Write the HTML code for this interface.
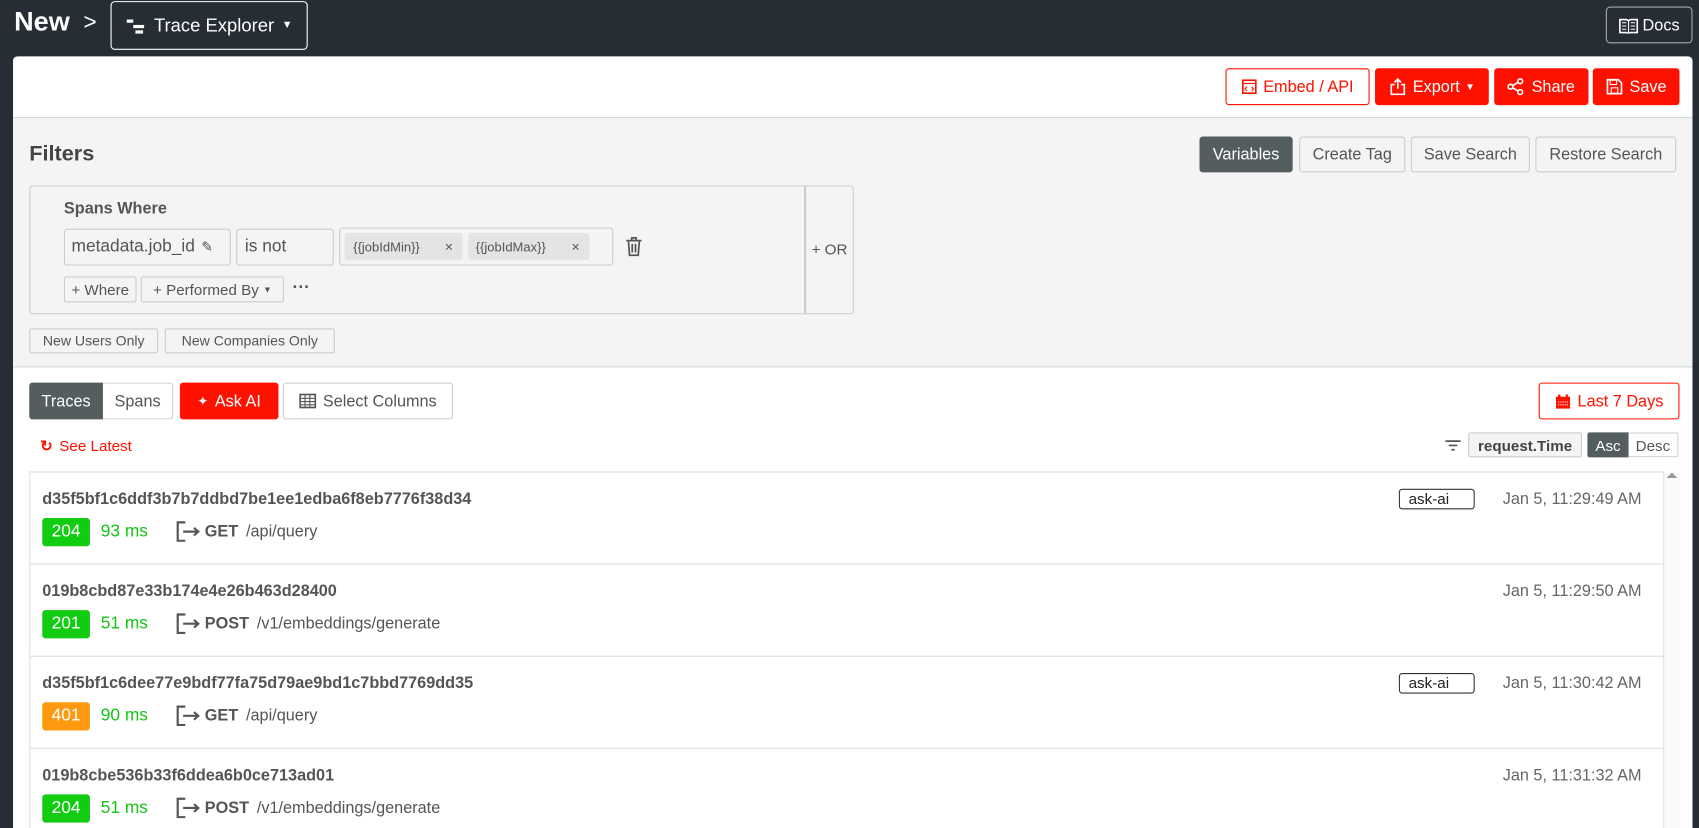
<!DOCTYPE html>
<html><head><meta charset="utf-8"><style>
*{box-sizing:border-box;margin:0;padding:0}
html,body{width:1699px;height:828px;overflow:hidden;background:#262d34;font-family:"Liberation Sans",Arial,sans-serif}
#w{position:absolute;left:0;top:0;width:1568px;height:764px;transform:scale(1.08355,1.0838);transform-origin:0 0}
.a{position:absolute}
.btn{position:absolute;display:flex;align-items:center;justify-content:center;border-radius:3px;font-size:15px;white-space:nowrap}
.red{background:#ff1100;color:#fff}
.ored{border:1px solid #ff1100;color:#ff1100;background:#fff}
.gr{border:1px solid #ccc;background:#f4f4f4;color:#555}
.dk{background:#555e5e;color:#fff}
.sm{font-size:13px;border:1px solid #ccc;background:#f4f4f4;color:#555;border-radius:2px}
.row{position:absolute;left:0;width:1509px;height:85px;border-bottom:1px solid #ddd}
.id{position:absolute;left:11px;top:16px;font-size:15px;font-weight:bold;color:#555}
.badge{position:absolute;left:11px;top:42px;width:44px;height:26px;border-radius:3px;color:#fff;font-size:16px;display:flex;align-items:center;justify-content:center}
.ms{position:absolute;left:65px;top:46px;color:#16c416;font-size:16px}
.req{position:absolute;left:134px;top:44px;color:#555;font-size:15px;display:flex;align-items:center;gap:3px}
.date{position:absolute;right:22px;top:16px;color:#666;font-size:15px}
.tag{position:absolute;left:1263px;top:15px;width:70px;height:19px;border:1px solid #333;border-radius:3px;font-size:14px;color:#222;padding-left:8px;line-height:17px}
</style></head><body><div id="w">
<div class="a" style="left:13px;top:6px;color:#fff;font-size:25px;font-weight:bold">New</div>
<div class="a" style="left:77px;top:9px;color:#fff;font-size:21px">&gt;</div>
<div class="btn" style="left:102px;top:1px;width:182px;height:45px;border:1px solid #fff;color:#fff;font-size:17px;border-radius:4px">
<svg width="22" height="16" viewBox="0 0 22 16" style="margin-right:4px"><rect x="1" y="2" width="6" height="3" fill="#fff"/><rect x="7" y="7" width="10" height="3" fill="#fff"/><rect x="9" y="12" width="7" height="3" fill="#fff"/></svg>Trace Explorer <span style="font-size:10px;margin-left:7px">▼</span></div>
<div class="btn" style="left:1482px;top:6px;width:80px;height:34px;border:1px solid #aaa;color:#fff;font-size:15px;border-radius:4px">
<svg width="18" height="15" viewBox="0 0 18 15" style="margin-right:4px"><path d="M1 2h6l2 1 2-1h6v12h-6l-2 1-2-1H1z" fill="none" stroke="#fff" stroke-width="1.5"/><path d="M9 3v11M3 5h4M3 8h4M3 11h4M11 5h4M11 8h4M11 11h4" stroke="#fff"/></svg>Docs</div>

<div class="a" style="left:12px;top:52px;width:1550px;height:712px;background:#fff;border-radius:4px 4px 0 0"></div>
<div class="btn ored" style="left:1131px;top:63px;width:133px;height:34px"><svg width="14" height="14" style="margin-right:6px"><rect x="1" y="1" width="12" height="12" fill="none" stroke="#f10" stroke-width="1.5"/><path d="M1 4h12M5 7l-2 2 2 2M9 7l2 2-2 2" stroke="#f10" fill="none"/></svg>Embed / API</div>
<div class="btn red" style="left:1269px;top:63px;width:105px;height:34px"><svg width="16" height="16" style="margin-right:6px"><path d="M5 6H2v9h12V6h-3M8 10V1M5 4l3-3 3 3" stroke="#fff" stroke-width="1.5" fill="none"/></svg>Export <span style="font-size:9px;margin-left:5px">▼</span></div>
<div class="btn red" style="left:1379px;top:63px;width:87px;height:34px"><svg width="16" height="16" style="margin-right:6px"><circle cx="12" cy="3" r="2.2" fill="none" stroke="#fff" stroke-width="1.5"/><circle cx="12" cy="13" r="2.2" fill="none" stroke="#fff" stroke-width="1.5"/><circle cx="3" cy="8" r="2.2" fill="none" stroke="#fff" stroke-width="1.5"/><path d="M5 7l5-3M5 9l5 3" stroke="#fff" stroke-width="1.5"/></svg>Share</div>
<div class="btn red" style="left:1470px;top:63px;width:80px;height:34px"><svg width="16" height="16" style="margin-right:6px"><path d="M1.5 1.5h10l3 3v10h-13z" fill="none" stroke="#fff" stroke-width="1.5"/><rect x="4" y="2" width="6" height="4" fill="none" stroke="#fff"/><rect x="5" y="9" width="6" height="5" fill="none" stroke="#fff"/></svg>Save</div>

<div class="a" style="left:12px;top:108px;width:1550px;height:231px;background:#f4f4f4;border-top:1px solid #d3d6d6;border-bottom:1px solid #d3d6d6"></div>
<div class="a" style="left:27px;top:131px;font-size:20px;font-weight:bold;color:#444">Filters</div>
<div class="btn dk" style="left:1107px;top:126px;width:86px;height:33px">Variables</div>
<div class="btn gr" style="left:1199px;top:126px;width:98px;height:33px">Create Tag</div>
<div class="btn gr" style="left:1302px;top:126px;width:110px;height:33px">Save Search</div>
<div class="btn gr" style="left:1417px;top:126px;width:130px;height:33px">Restore Search</div>

<div class="a" style="left:27px;top:171px;width:761px;height:119px;border:1px solid #ccc;border-radius:3px"></div>
<div class="a" style="left:742px;top:171px;width:2px;height:119px;background:#ccc"></div>
<div class="a" style="left:749px;top:222px;font-size:14px;color:#555">+ OR</div>
<div class="a" style="left:59px;top:184px;font-size:15px;font-weight:bold;color:#555">Spans Where</div>
<div class="btn" style="left:59px;top:211px;width:154px;height:34px;border:1px solid #ccc;color:#555;justify-content:flex-start;padding-left:6px;font-size:16px">metadata.job_id <span style="font-size:13px;margin-left:6px">✎</span></div>
<div class="btn" style="left:218px;top:211px;width:90px;height:34px;border:1px solid #ccc;color:#555;justify-content:flex-start;padding-left:7px;font-size:16px">is not</div>
<div class="a" style="left:313px;top:210px;width:253px;height:35px;border:1px solid #ccc;border-radius:3px"></div>
<div class="btn" style="left:318px;top:215px;width:109px;height:25px;background:#e4e4e4;color:#555;font-size:12px;justify-content:space-between;padding:0 9px 0 8px">{{jobIdMin}}<span style="font-size:13px">×</span></div>
<div class="btn" style="left:432px;top:215px;width:112px;height:25px;background:#e4e4e4;color:#555;font-size:12px;justify-content:space-between;padding:0 9px 0 7px">{{jobIdMax}}<span style="font-size:13px">×</span></div>
<svg class="a" style="left:577px;top:218px" width="16" height="19" viewBox="0 0 16 19"><path d="M1 4h14M6 4V1.5h4V4M3 5l1 12.5h8L13 5M6.5 7v8M9.5 7v8" fill="none" stroke="#555" stroke-width="1.6"/></svg>
<div class="btn sm" style="left:59px;top:255px;width:67px;height:24px;font-size:14px">+ Where</div>
<div class="btn sm" style="left:130px;top:255px;width:132px;height:24px;font-size:14px">+ Performed By <span style="font-size:8px;margin-left:4px">▼</span></div>
<div class="a" style="left:270px;top:257px;font-size:16px;color:#555;font-weight:bold">···</div>
<div class="btn sm" style="left:27px;top:303px;width:119px;height:23px">New Users Only</div>
<div class="btn sm" style="left:152px;top:303px;width:157px;height:23px">New Companies Only</div>

<div class="btn dk" style="left:27px;top:353px;width:68px;height:34px;border-radius:3px 0 0 3px">Traces</div>
<div class="btn" style="left:95px;top:353px;width:65px;height:34px;border:1px solid #ccc;border-left:none;color:#555;border-radius:0 3px 3px 0">Spans</div>
<div class="btn red" style="left:166px;top:353px;width:91px;height:34px"><span style="font-size:12px;margin-right:6px">✦</span>Ask AI</div>
<div class="btn" style="left:261px;top:353px;width:157px;height:34px;border:1px solid #ccc;color:#555"><svg width="16" height="14" style="margin-right:6px"><rect x="1" y="1" width="14" height="12" fill="none" stroke="#555" stroke-width="1.5"/><path d="M1 4.5h14M1 7.5h14M1 10.5h14M5.5 1v12M10 1v12" stroke="#555"/></svg>Select Columns</div>
<div class="btn ored" style="left:1420px;top:353px;width:130px;height:34px"><svg width="15" height="15" style="margin-right:6px"><rect x="1" y="3" width="13" height="11" fill="#f10"/><rect x="3" y="1" width="2" height="3" fill="#f10"/><rect x="10" y="1" width="2" height="3" fill="#f10"/><path d="M3 8h9M3 10.5h9" stroke="#fff" stroke-dasharray="1 1"/></svg>Last 7 Days</div>
<div class="a" style="left:37px;top:403px;color:#f10;font-size:14px"><span style="font-weight:bold;margin-right:6px">↻</span>See Latest</div>
<svg class="a" style="left:1333px;top:405px" width="16" height="12"><path d="M1 2h14M4 6h8M6.5 10h3" stroke="#555" stroke-width="1.6"/></svg>
<div class="btn sm" style="left:1355px;top:399px;width:105px;height:23px;font-size:14px;font-weight:bold;color:#444">request.Time</div>
<div class="btn dk" style="left:1465px;top:399px;width:38px;height:23px;font-size:14px;border-radius:2px 0 0 2px">Asc</div>
<div class="btn" style="left:1503px;top:399px;width:46px;height:23px;font-size:14px;border:1px solid #ccc;border-left:none;color:#555;border-radius:0 2px 2px 0">Desc</div>

<div class="a" style="left:27px;top:435px;width:1509px;height:329px;border:1px solid #ddd;border-bottom:none;overflow:hidden">
 <div class="row" style="top:0"><div class="id">d35f5bf1c6ddf3b7b7ddbd7be1ee1edba6f8eb7776f38d34</div><div class="badge" style="background:#11cc11">204</div><div class="ms">93 ms</div><div class="req"><svg width="24" height="20"><path d="M9 2H2v17h7M7 10.5h13M17 7l4 3.5-4 3.5" fill="none" stroke="#555" stroke-width="2"/></svg><b>GET</b>&nbsp;/api/query</div><div class="tag">ask-ai</div><div class="date">Jan 5, 11:29:49 AM</div></div>
 <div class="row" style="top:85px"><div class="id">019b8cbd87e33b174e4e26b463d28400</div><div class="badge" style="background:#11cc11">201</div><div class="ms">51 ms</div><div class="req"><svg width="24" height="20"><path d="M9 2H2v17h7M7 10.5h13M17 7l4 3.5-4 3.5" fill="none" stroke="#555" stroke-width="2"/></svg><b>POST</b>&nbsp;/v1/embeddings/generate</div><div class="date">Jan 5, 11:29:50 AM</div></div>
 <div class="row" style="top:170px"><div class="id">d35f5bf1c6dee77e9bdf77fa75d79ae9bd1c7bbd7769dd35</div><div class="badge" style="background:#ff9a10">401</div><div class="ms">90 ms</div><div class="req"><svg width="24" height="20"><path d="M9 2H2v17h7M7 10.5h13M17 7l4 3.5-4 3.5" fill="none" stroke="#555" stroke-width="2"/></svg><b>GET</b>&nbsp;/api/query</div><div class="tag">ask-ai</div><div class="date">Jan 5, 11:30:42 AM</div></div>
 <div class="row" style="top:255px"><div class="id">019b8cbe536b33f6ddea6b0ce713ad01</div><div class="badge" style="background:#11cc11">204</div><div class="ms">51 ms</div><div class="req"><svg width="24" height="20"><path d="M9 2H2v17h7M7 10.5h13M17 7l4 3.5-4 3.5" fill="none" stroke="#555" stroke-width="2"/></svg><b>POST</b>&nbsp;/v1/embeddings/generate</div><div class="date">Jan 5, 11:31:32 AM</div></div>
</div>
<div class="a" style="left:1537px;top:435px;width:13px;height:329px;background:#fafafa"></div>
<div class="a" style="left:1538px;top:436px;width:0;height:0;border-left:5px solid transparent;border-right:5px solid transparent;border-bottom:5px solid #999"></div>
</div></body></html>
